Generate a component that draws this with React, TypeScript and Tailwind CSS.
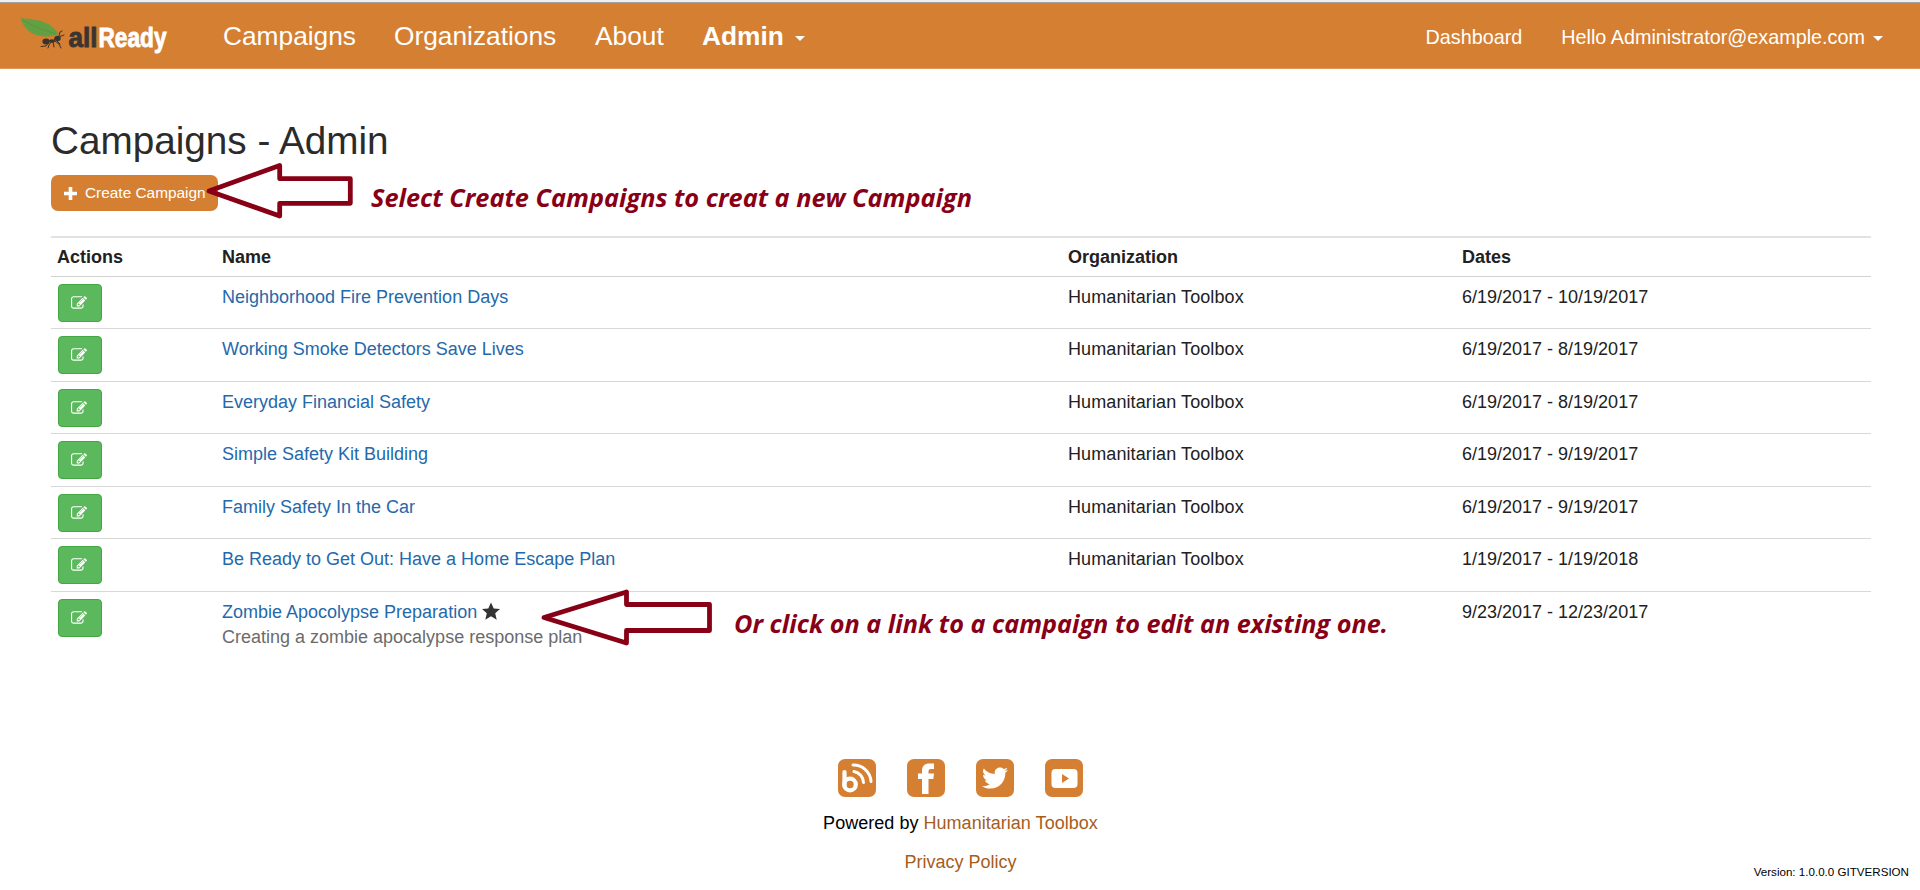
import React from "react";
import { FaTwitter } from "react-icons/fa";

type Campaign = {
  name: string;
  organization: string;
  dates: string;
  featured?: boolean;
  headline?: string;
};

const campaigns: Campaign[] = [
  { name: "Neighborhood Fire Prevention Days", organization: "Humanitarian Toolbox", dates: "6/19/2017 - 10/19/2017" },
  { name: "Working Smoke Detectors Save Lives", organization: "Humanitarian Toolbox", dates: "6/19/2017 - 8/19/2017" },
  { name: "Everyday Financial Safety", organization: "Humanitarian Toolbox", dates: "6/19/2017 - 8/19/2017" },
  { name: "Simple Safety Kit Building", organization: "Humanitarian Toolbox", dates: "6/19/2017 - 9/19/2017" },
  { name: "Family Safety In the Car", organization: "Humanitarian Toolbox", dates: "6/19/2017 - 9/19/2017" },
  { name: "Be Ready to Get Out: Have a Home Escape Plan", organization: "Humanitarian Toolbox", dates: "1/19/2017 - 1/19/2018" },
  {
    name: "Zombie Apocolypse Preparation",
    organization: "",
    dates: "9/23/2017 - 12/23/2017",
    featured: true,
    headline: "Creating a zombie apocalypse response plan",
  },
];

function Logo() {
  return (
    <svg className="block h-[60px] w-[160px] overflow-visible" viewBox="0 -8 160 60">
      {/* ant */}
      <g fill="#3a332d" stroke="#3a332d" strokeLinecap="round">
        <ellipse cx="26" cy="27.500" rx="3.600" ry="3" stroke="none" />
        <ellipse cx="32" cy="27" rx="3" ry="1.800" stroke="none" />
        <ellipse cx="37.500" cy="24.500" rx="3.200" ry="2.800" stroke="none" />
        <path
          d="M29 28l-3 4-5 .5M31 28l-2 3-1 3M33 28l1 5M35 27l4 3 2 4M36 26l4 4M39 22l1-4 2-1M40 22.500l4-1.500M34 26l3-2"
          fill="none"
          strokeWidth="1"
        />
      </g>
      <path
        d="M.5 3.500c3 2 9 .5 15 2.500 8 1 18 5 23 14-6 3-17 3.500-25 0C6 16 2.500 11 .5 3.500z"
        fill="#63a043"
      />
      <path d="M3 6c9 6 21 10 33 14" fill="none" stroke="#579138" strokeWidth=".7" />
      <text x="48.500" y="33" textLength="29" lengthAdjust="spacingAndGlyphs" className="fill-[#3a3531] stroke-[#3a3531] stroke-[0.9px] font-['Liberation_Sans_Narrow','Liberation_Sans',sans-serif] text-[28px] font-bold">all</text>
      <text x="78.500" y="33" textLength="68" lengthAdjust="spacingAndGlyphs" className="fill-white stroke-white stroke-[0.9px] font-['Liberation_Sans_Narrow','Liberation_Sans',sans-serif] text-[28px] font-bold">Ready</text>
    </svg>
  );
}

function Caret() {
  return <span className="inline-block border-x-[5px] border-t-[5px] border-x-transparent border-t-white" />;
}

function EditIcon() {
  return (
    <svg className="size-[16px]" viewBox="0 0 1792 1792" fill="currentColor">
      <path d="M888 1184l116-116-152-152-116 116v56h96v96h56zm440-720q-16-16-33 1l-350 350q-17 17-1 33t33-1l350-350q17-17 1-33zm80 594v190q0 119-84.5 203.5t-203.5 84.5h-832q-119 0-203.5-84.5t-84.5-203.5v-832q0-119 84.500-203.500t203.500-84.500h832q63 0 117 25 15 7 18 23 3 17-9 29l-49 49q-14 14-32 8-23-6-45-6h-832q-66 0-113 47t-47 113v832q0 66 47 113t113 47h832q66 0 113-47t47-113v-126q0-13 9-22l64-64q15-15 35-7t20 29zm-96-738l288 288-672 672h-288v-288zm444 132l-92 92-288-288 92-92q28-28 68-28t68 28l152 152q28 28 28 68t-28 68z" />
    </svg>
  );
}

function StarIcon() {
  return (
    <svg className="ml-[5px] inline-block size-[18px] align-[-2px]" viewBox="0 0 24 24" fill="#333">
      <path d="M12 .5l3.600 8 8.400.8-6.400 5.700 2 8.500L12 19l-7.600 4.500 2-8.500L0 9.300l8.400-.8z" />
    </svg>
  );
}

function Header() {
  return (
    <header className="h-[69px] border-t-2 border-[#eef0f2]">
      <nav className="flex h-[67px] items-center border-t border-b border-t-[#a8a49c] border-b-[#dd9a5c] bg-[#d57f32] pr-[37px] pl-[20px] text-white">
        <Logo />
        <div className="ml-[43px] flex items-center gap-[39px] pt-[2px] text-[26.300px] leading-none">
          <a className="w-[132px]">Campaigns</a>
          <a className="w-[162px]">Organizations</a>
          <a className="w-[68px]">About</a>
          <a className="flex items-center gap-[11px] font-bold">
            Admin
            <span className="flex pt-[5px]"><Caret /></span>
          </a>
        </div>
        <div className="ml-auto flex items-center gap-[39px] pt-[4px] text-[19.800px] leading-none">
          <a>Dashboard</a>
          <a className="flex items-center gap-[8px]">
            Hello Administrator@example.com
            <span className="flex pt-[2px]"><Caret /></span>
          </a>
        </div>
      </nav>
    </header>
  );
}

function CampaignTable() {
  return (
    <table className="mt-[25px] w-full table-fixed border-collapse text-left text-[18px] leading-[25px] text-[#212121]">
      <colgroup>
        <col className="w-[165px]" />
        <col className="w-[846px]" />
        <col className="w-[394px]" />
        <col />
      </colgroup>
      <thead>
        <tr className="h-[39px] border-t-2 border-b border-t-[#e2e2e2] border-b-[#d2d2d2]">
          <th className="pt-[2px] pl-[6px]">Actions</th>
          <th className="px-[6px] pt-[2px]">Name</th>
          <th className="px-[6px] pt-[2px]">Organization</th>
          <th className="px-[6px] pt-[2px]">Dates</th>
        </tr>
      </thead>
      <tbody>
        {campaigns.map((c) => (
          <tr key={c.name} className="h-[52.500px] border-t border-[#d8d8d8] align-top">
            <td className="pt-[7px] pl-[6.500px]">
              <button className="flex h-[38px] w-[44px] items-center justify-center rounded-[4px] border border-[#43a843] bg-[#5cb85c] pr-px text-white">
                <EditIcon />
              </button>
            </td>
            <td className="px-[6px] pt-[8px]">
              <a className="text-[#2469ab]">{c.name}</a>
              {c.featured && <StarIcon />}
              {c.headline && <div className="text-[#6b6b6b]">{c.headline}</div>}
            </td>
            <td className="px-[6px] pt-[8px] tracking-[0.1px]">{c.organization}</td>
            <td className="px-[6px] pt-[8px]">{c.dates}</td>
          </tr>
        ))}
      </tbody>
    </table>
  );
}

const tile = "flex size-[38px] items-center justify-center rounded-[7px] bg-[#d57f32] text-white";

function Footer() {
  return (
    <footer className="mt-[109px] flex flex-col items-center pl-px text-[18px] leading-[25px] text-black">
      <div className="flex gap-[31px]">
        <a className={tile}>
          <svg className="size-[38px]" viewBox="0 0 38 38" fill="none" stroke="#fff" strokeLinecap="round">
            <path d="M6.500 13v13.500" strokeWidth="4.200" />
            <circle cx="12" cy="25.500" r="5.800" strokeWidth="4.200" />
            <path d="M16 12.500a11.500 11.500 0 0 1 9.500 11" strokeWidth="3" />
            <path d="M15 6a17.500 17.500 0 0 1 18 16.500" strokeWidth="3" />
          </svg>
        </a>
        <a className={tile}>
          <svg className="size-[38px]" viewBox="0 0 38 38" fill="#fff">
            <path d="M15 35V20h-4v-5.500h4v-2.500c0-5 2.500-7.500 7.500-7.500h4.500v5.500h-3c-2 0-2.500 1-2.500 2.500v2h5.500l-.7 5.500h-4.800v15z" />
          </svg>
        </a>
        <a className={tile}><FaTwitter size={26} /></a>
        <a className={tile}>
          <svg className="size-[38px]" viewBox="0 0 38 38">
            <rect x="6.500" y="10" width="26" height="19" rx="4" fill="#fff" />
            <path d="M17 15v9l7-4.500z" fill="#d57f32" />
          </svg>
        </a>
      </div>
      <p className="mt-[14px] tracking-[0.03px]">Powered by <a className="text-[#a65d1c]">Humanitarian Toolbox</a></p>
      <p className="mt-[14px]"><a className="text-[#a65d1c]">Privacy Policy</a></p>
    </footer>
  );
}

export default function App() {
  return (
    <div className="relative h-[890px] w-[1920px] overflow-hidden bg-white font-['Liberation_Sans',Arial,sans-serif]">
      <Header />
      <main className="pt-[50px] pr-[49px] pl-[51px]">
        <h1 className="text-[38.700px] leading-[44px] text-[#2b2b2b]">Campaigns - Admin</h1>
        <button className="mt-[12px] flex h-[36px] w-[167px] items-center gap-[8px] rounded-[7px] bg-[#d57f32] pl-[13px] text-[15.400px] whitespace-nowrap text-white">
          <svg className="size-[13px]" viewBox="0 0 13 13" fill="#fff">
            <path d="M4.700 0h3.600v4.700H13v3.600H8.300V13H4.700V8.300H0V4.700h4.700z" />
          </svg>
          Create Campaign
        </button>
        <CampaignTable />
      </main>
      <Footer />
      <svg className="absolute top-[160px] left-[200px] h-[62px] w-[160px]" viewBox="200 160 160 62" fill="none" stroke="#880015" strokeWidth="4.800" strokeLinejoin="round">
        <path d="M209 191L279.700 165.500v13.200h70.600v24.600h-70.600v12.700z" />
      </svg>
      <svg className="absolute top-[586px] left-[530px] h-[64px] w-[190px]" viewBox="530 586 190 64" fill="none" stroke="#880015" strokeWidth="4.800" strokeLinejoin="round">
        <path d="M544 617.500L626.500 592v12.500h83v26h-83v12.500z" />
      </svg>
      <svg className="absolute top-[180px] left-[360px] h-[40px] w-[630px] overflow-visible">
        <text x="11" y="27" textLength="601" lengthAdjust="spacingAndGlyphs" className="fill-[#880015] font-['Open_Sans',sans-serif] text-[25px] font-bold italic">Select Create Campaigns to creat a new Campaign</text>
      </svg>
      <svg className="absolute top-[606px] left-[724px] h-[40px] w-[680px] overflow-visible">
        <text x="10" y="27" textLength="654" lengthAdjust="spacingAndGlyphs" className="fill-[#880015] font-['Open_Sans',sans-serif] text-[25px] font-bold italic">Or click on a link to a campaign to edit an existing one.</text>
      </svg>
      <div className="absolute right-[11px] bottom-[11px] text-[11.600px] leading-[15px] text-black">Version: 1.0.0.0 GITVERSION</div>
    </div>
  );
}
